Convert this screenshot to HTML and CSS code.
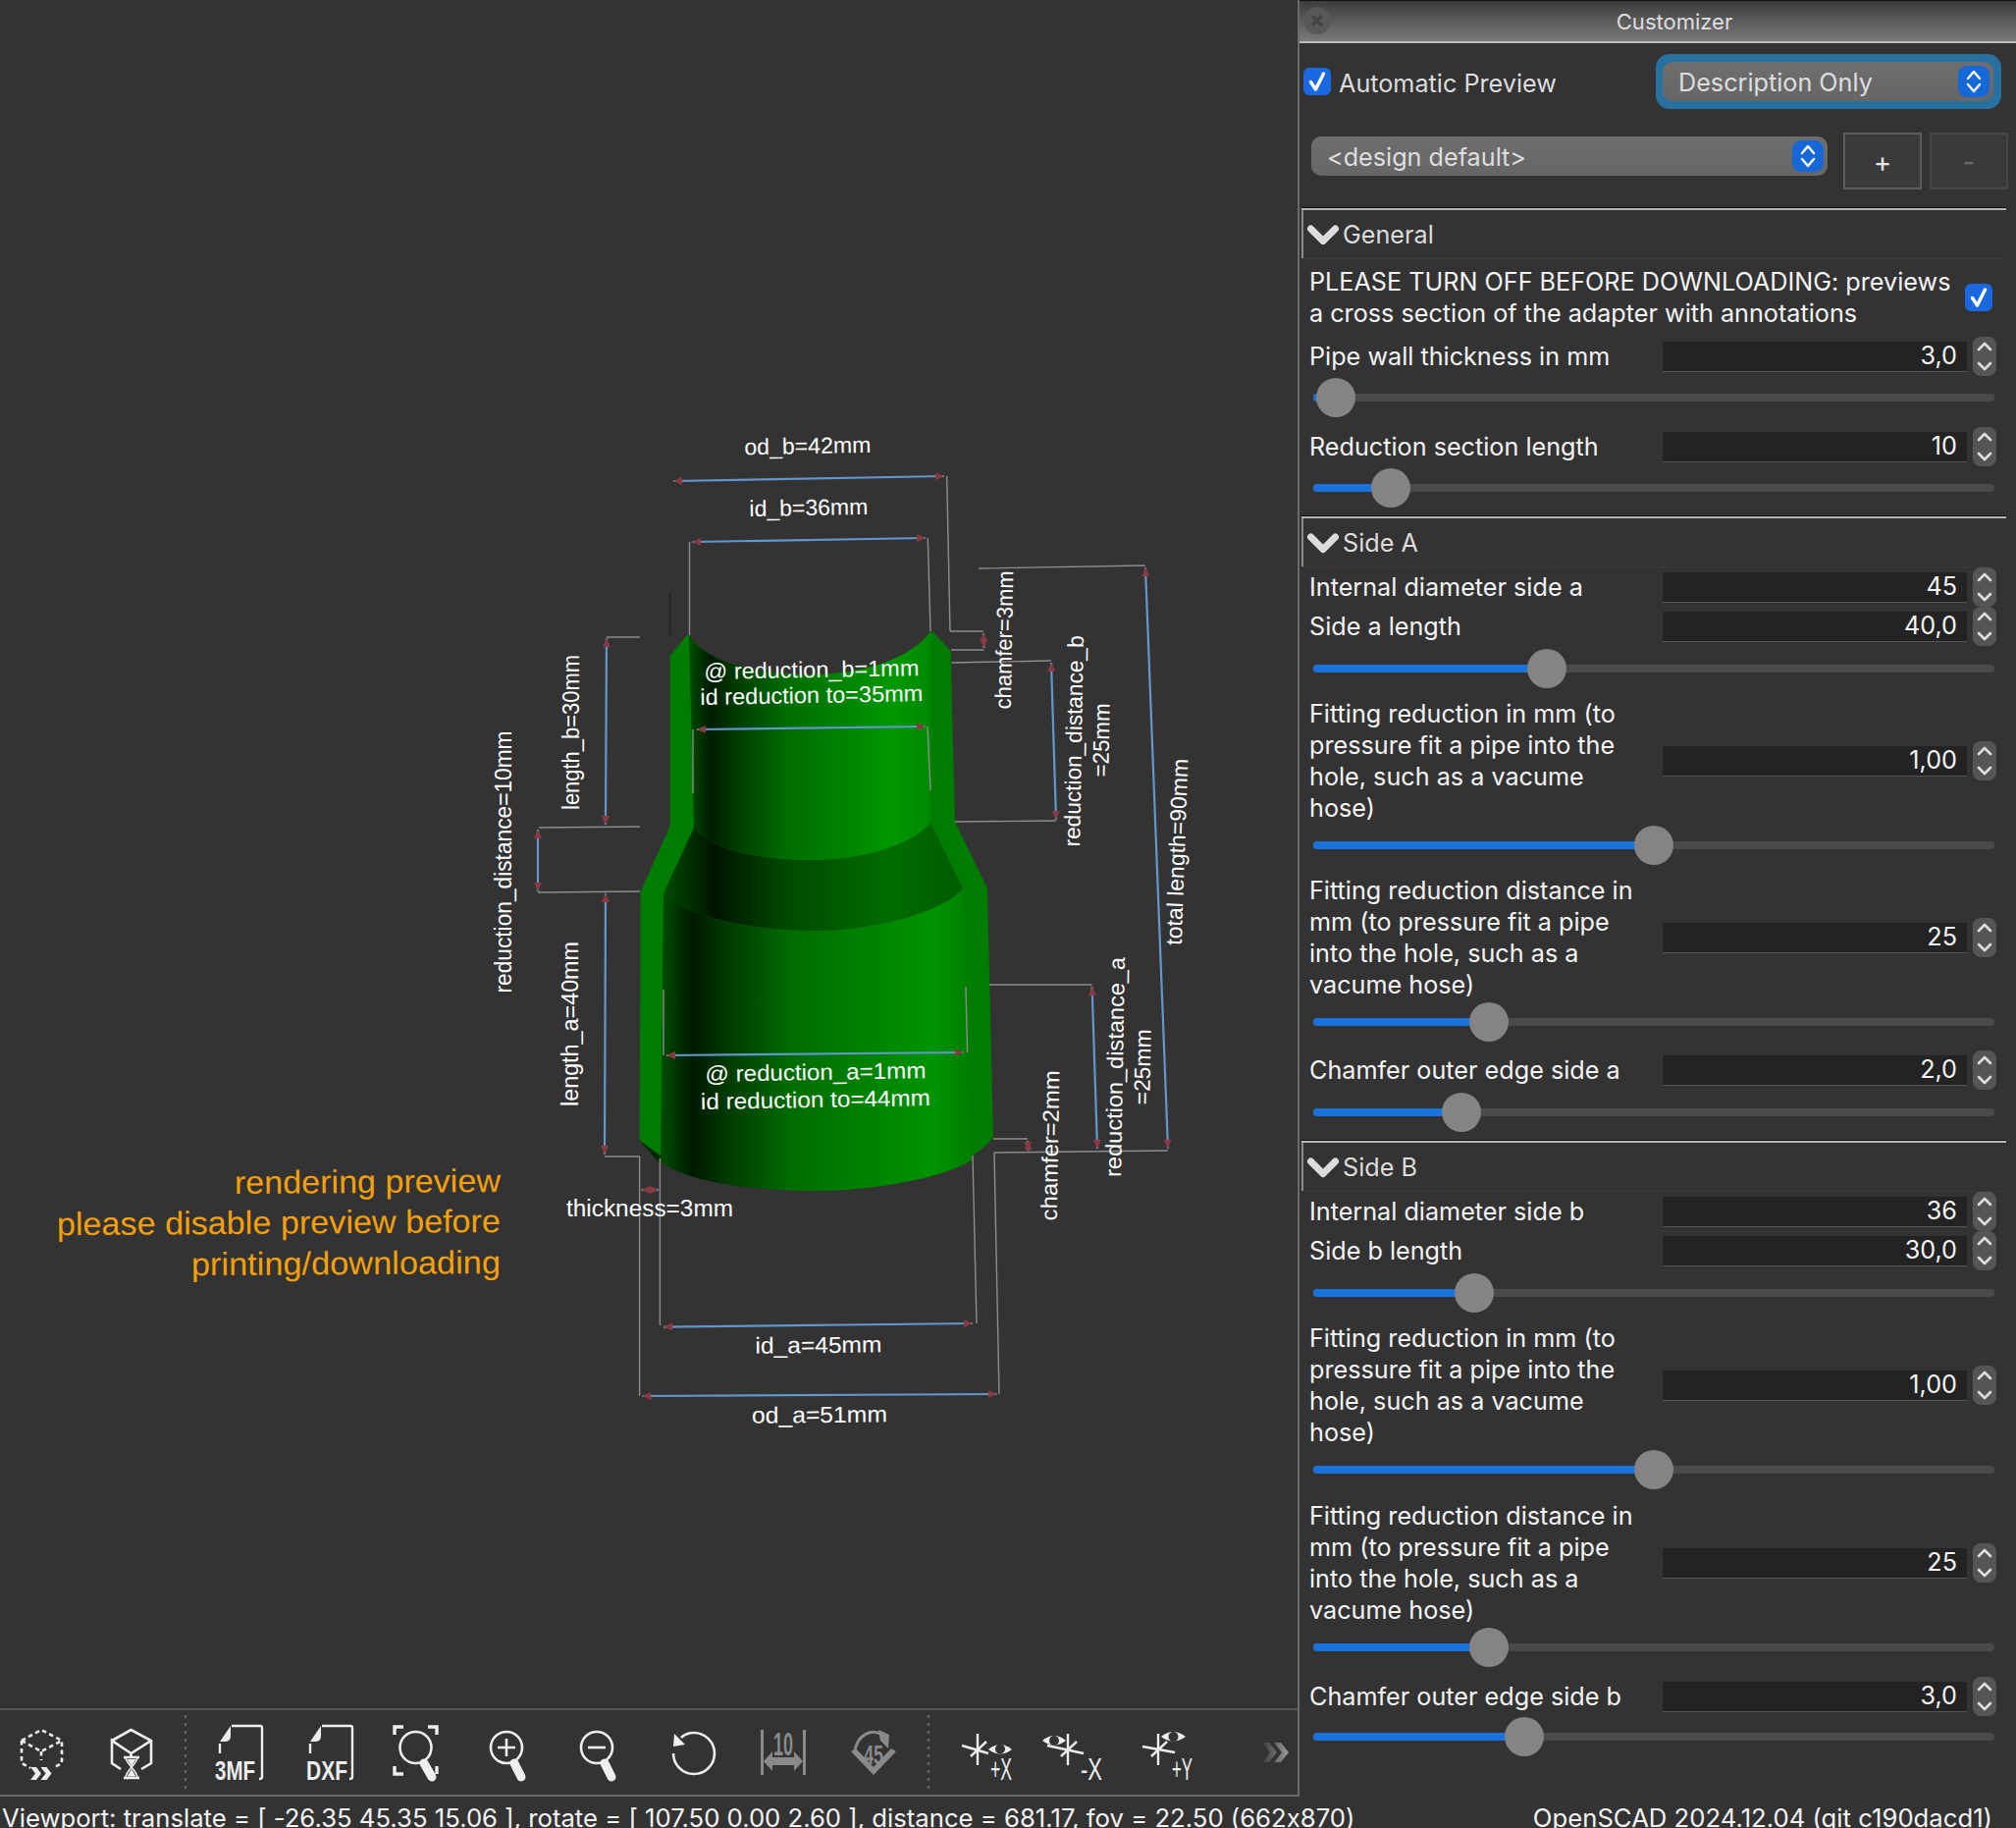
FILE: index.html
```html
<!DOCTYPE html>
<html lang="en">
<head>
<meta charset="utf-8">
<title>OpenSCAD Customizer</title>
<link rel="stylesheet" href="styles.css">
</head>
<body>
<svg class="defs" width="0" height="0" aria-hidden="true">
  <defs>
    <symbol id="tick" viewBox="0 0 28 28"><path d="M7.5 14.5 L12.5 22 L20.5 6" fill="none" stroke="#fff" stroke-width="3.4" stroke-linecap="round" stroke-linejoin="round"/></symbol>
    <symbol id="updown" viewBox="0 0 32 32"><path d="M10 13 L16 6 L22 13 M10 19 L16 26 L22 19" fill="none" stroke="#fff" stroke-width="2.4" stroke-linecap="round" stroke-linejoin="round"/></symbol>
    <symbol id="spin" viewBox="0 0 24 40"><path d="M6 13 L12 7 L18 13 M6 27 L12 33 L18 27" fill="none" stroke="#ddd" stroke-width="2.6" stroke-linecap="round" stroke-linejoin="round"/></symbol>
    <symbol id="chev" viewBox="0 0 34 22"><path d="M4.5 5 L17 17.5 L29.5 5" fill="none" stroke="#dcdcdc" stroke-width="7" stroke-linecap="round" stroke-linejoin="round"/></symbol>
    <symbol id="file" viewBox="0 0 68 60"><path d="M26 3 H55 Q57 3 57 5 V55 Q57 57 54 57 M14 21 V31" fill="none" stroke="#eee" stroke-width="2.4"/><path d="M14 19 L25 3 V13 Q25 19 19 19 Z" fill="#eee"/></symbol>
    <symbol id="star" viewBox="0 0 68 60"><path d="M23 11 V43 M16 34 L32 19" fill="none" stroke="#eee" stroke-width="2.4"/></symbol>
    <marker id="arrow" markerUnits="userSpaceOnUse" markerWidth="12" markerHeight="10" refX="9" refY="4" orient="auto-start-reverse"><path d="M0 0 L9 4 L0 8 Z" fill="#8b3a42"/></marker>
    <linearGradient id="gu" gradientUnits="userSpaceOnUse" x1="702" y1="0" x2="948" y2="0"><stop offset="0" stop-color="#004c00"/><stop offset=".09" stop-color="#001c00"/><stop offset=".2" stop-color="#003c00"/><stop offset=".4" stop-color="#006c00"/><stop offset=".85" stop-color="#009800"/><stop offset="1" stop-color="#008800"/></linearGradient>
    <linearGradient id="gc" gradientUnits="userSpaceOnUse" x1="676" y1="0" x2="981" y2="0"><stop offset="0" stop-color="#004c00"/><stop offset=".17" stop-color="#001400"/><stop offset=".4" stop-color="#004800"/><stop offset=".75" stop-color="#006c00"/><stop offset="1" stop-color="#005c00"/></linearGradient>
    <linearGradient id="gl" gradientUnits="userSpaceOnUse" x1="674" y1="0" x2="988" y2="0"><stop offset="0" stop-color="#004c00"/><stop offset=".1" stop-color="#001a00"/><stop offset=".22" stop-color="#003c00"/><stop offset=".42" stop-color="#006c00"/><stop offset=".88" stop-color="#009400"/><stop offset="1" stop-color="#007e00"/></linearGradient>
    <linearGradient id="gm" x1="0" y1="0" x2="1" y2="0"><stop offset="0" stop-color="#3c3c3c"/><stop offset="1" stop-color="#999"/></linearGradient>
  </defs>
</svg>
<div class="main">
  <div class="left">
    <svg class="scene" viewBox="0 0 1322 1740" width="1322" height="1740">
      <path class="hull" d="M700 647 L682.6 668 V841.7 L652.6 908 L651.6 1161 C690 1195 760 1213 829 1213 C900 1213 985 1195 1012 1158 L1006 905 L973 837 L968.6 663 L950 643 C930 670 880 687 826 687 C770 687 720 675 702 647 Z"/>
      <path d="M652 1162 L671 1184 L673 1178 Z" fill="#002a00"/>
      <path fill="url(#gl)" d="M676 910 C700 935 770 948 830 948 C890 948 960 930 981 905 L985 1072 L990 1182 C960 1200 890 1213 829 1213 C770 1213 700 1205 673 1183 Z"/>
      <path fill="url(#gc)" d="M707 843 C725 865 770 876 826 876 C880 876 930 860 948 838 L981 905 C960 930 890 948 830 948 C770 948 700 935 676 910 Z"/>
      <path fill="url(#gu)" d="M702 647 C720 675 770 687 826 687 C880 687 930 670 948 643 L948 838 C930 860 880 876 826 876 C770 876 725 865 707 843 Z"/>

      <g class="ext">
        <path d="M964.7 485 L968 643 M702.5 552 V647 M945.3 548 L948 643"/>
        <path class="faint" d="M682.6 603 V647"/>
        <path d="M968 643 H1002 M969 662 H1002.5 M969.6 675 L1071 673 M973 837 L1076 836 M997 579 L1167 576 M1013 1174 L1190 1172"/>
        <path d="M618 649 H652 M549 843 L652 842 M548 909 L652 908 M616 1178 H651.6"/>
        <path d="M706 743 V808 M945 740 L948 805 M676 1008 V1075 M984 1005 L985.6 1072"/>
        <path d="M1008 1003 H1112.6 M1012 1160 H1047"/>
        <path d="M651.6 1178 V1422 M672.4 1180 V1350 M991 1177 L995 1348 M1013 1174 L1018 1420"/>
      </g>
      <g class="dim">
        <line x1="686" y1="490" x2="962" y2="485"/>
        <line x1="705.4" y1="552" x2="943" y2="548"/>
        <line x1="710" y1="743" x2="943" y2="740"/>
        <line x1="679" y1="1075" x2="982" y2="1072"/>
        <line x1="676" y1="1351.6" x2="991" y2="1348"/>
        <line x1="654.5" y1="1422" x2="1015.6" y2="1420"/>
        <line x1="653.5" y1="1212" x2="671" y2="1212"/>
        <line x1="1002" y1="645" x2="1002.5" y2="660"/>
        <line x1="1071" y1="675" x2="1076" y2="835"/>
        <line x1="1167" y1="578" x2="1190" y2="1170"/>
        <line x1="618" y1="650" x2="617" y2="840"/>
        <line x1="548" y1="845" x2="548" y2="908"/>
        <line x1="617" y1="910" x2="616" y2="1176"/>
        <line x1="1112.6" y1="1005" x2="1118" y2="1170"/>
        <line x1="1047" y1="1162" x2="1047.6" y2="1172"/>
      </g>
      <g class="lbl">
        <text x="823" y="462" textLength="129" lengthAdjust="spacingAndGlyphs" transform="rotate(-1 823 462)">od_b=42mm</text>
        <text x="824" y="525" textLength="121" lengthAdjust="spacingAndGlyphs" transform="rotate(-1 824 525)">id_b=36mm</text>
        <text x="827" y="690" textLength="219" lengthAdjust="spacingAndGlyphs" transform="rotate(-1 827 690)">@ reduction_b=1mm</text>
        <text x="827" y="716" textLength="227" lengthAdjust="spacingAndGlyphs" transform="rotate(-1 827 716)">id reduction to=35mm</text>
        <text x="831" y="1100" textLength="225" lengthAdjust="spacingAndGlyphs" transform="rotate(-1 831 1100)">@ reduction_a=1mm</text>
        <text x="831" y="1128" textLength="234" lengthAdjust="spacingAndGlyphs" transform="rotate(-1 831 1128)">id reduction to=44mm</text>
        <text x="662" y="1239" textLength="170" lengthAdjust="spacingAndGlyphs">thickness=3mm</text>
        <text x="834" y="1378" textLength="129" lengthAdjust="spacingAndGlyphs" transform="rotate(-.5 834 1378)">id_a=45mm</text>
        <text x="835" y="1449" textLength="138" lengthAdjust="spacingAndGlyphs" transform="rotate(-.5 835 1449)">od_a=51mm</text>
        <text textLength="158" lengthAdjust="spacingAndGlyphs" transform="translate(590 746) rotate(-90)">length_b=30mm</text>
        <text textLength="267" lengthAdjust="spacingAndGlyphs" transform="translate(521 878) rotate(-90)">reduction_distance=10mm</text>
        <text textLength="168" lengthAdjust="spacingAndGlyphs" transform="translate(589 1043) rotate(-90)">length_a=40mm</text>
        <text textLength="141" lengthAdjust="spacingAndGlyphs" transform="translate(1031 652) rotate(-89)">chamfer=3mm</text>
        <text textLength="215" lengthAdjust="spacingAndGlyphs" transform="translate(1102 755) rotate(-89)">reduction_distance_b</text>
        <text textLength="75" lengthAdjust="spacingAndGlyphs" transform="translate(1130 754) rotate(-89)">=25mm</text>
        <text textLength="190" lengthAdjust="spacingAndGlyphs" transform="translate(1207 868) rotate(-88)">total length=90mm</text>
        <text textLength="224" lengthAdjust="spacingAndGlyphs" transform="translate(1144 1087) rotate(-89)">reduction_distance_a</text>
        <text textLength="77" lengthAdjust="spacingAndGlyphs" transform="translate(1172 1087) rotate(-89)">=25mm</text>
        <text textLength="153" lengthAdjust="spacingAndGlyphs" transform="translate(1078 1167) rotate(-89)">chamfer=2mm</text>
      </g>
      <g class="warn">
        <text x="510" y="1214" textLength="271" lengthAdjust="spacingAndGlyphs" transform="rotate(-.4 510 1214)">rendering preview</text>
        <text x="510" y="1255" textLength="452" lengthAdjust="spacingAndGlyphs" transform="rotate(-.4 510 1255)">please disable preview before</text>
        <text x="510" y="1297" textLength="315" lengthAdjust="spacingAndGlyphs" transform="rotate(-.4 510 1297)">printing/downloading</text>
      </g>
    </svg>

    <div class="toolbar">
      <button class="tool"><svg class="ico" viewBox="0 0 68 60">
        <path class="ln dash" d="M14 18 L34 7 L55 18 V41 L46 46"/>
        <path class="ln dash" d="M14 18 V41 L23 46"/>
        <path class="ln dash" d="M14 18 L34 29 L55 18"/>
        <path class="ln dash" d="M34 29 V38"/>
        <path d="M23 45 H29 L34 51.5 L29 58 H23 L28 51.5 Z M33.5 45 H39.5 L44.5 51.5 L39.5 58 H33.5 L38.5 51.5 Z" fill="#eee"/>
      </svg></button>
      <button class="tool"><svg class="ico" viewBox="0 0 68 60">
        <path class="ln" d="M14 18 L33.5 7 L54 18 V41 L44 47 M23 47 L14 41 V18 L33.5 31 L54 18 M33.5 31 V34"/>
        <path class="ln" d="M26 35 H42 M26 56 H42"/>
        <path class="ln thin" d="M28 35 C28 42 40 48 40 56 M40 35 C40 42 28 48 28 56"/>
        <path d="M29.5 37 H38.5 L34 44 Z M34 47 L38.5 54.5 H29.5 Z" fill="#eee"/>
      </svg></button>
      <span class="sep first"></span>
      <button class="tool"><svg class="ico" viewBox="0 0 68 60"><use href="#file"/><text class="ftxt" x="9" y="58" textLength="41" lengthAdjust="spacingAndGlyphs">3MF</text></svg></button>
      <button class="tool"><svg class="ico" viewBox="0 0 68 60"><use href="#file"/><text class="ftxt" x="10" y="58" textLength="42" lengthAdjust="spacingAndGlyphs">DXF</text></svg></button>
      <button class="tool"><svg class="ico" viewBox="0 0 68 60">
        <path class="ln wide" d="M8 12 V4 H17 M42 4 H51 V12 M8 44 V52 H17"/>
        <circle class="ln" cx="29.5" cy="25" r="16"/>
        <path class="hdl" d="M38 41 L46 55"/><path class="ln wide" d="M51 44 V52"/>
      </svg></button>
      <button class="tool"><svg class="ico" viewBox="0 0 68 60">
        <circle class="ln" cx="30" cy="25" r="16"/><path class="ln" d="M21 25 H39 M30 16 V34"/><path class="hdl" d="M38 41 L45 55"/>
      </svg></button>
      <button class="tool"><svg class="ico" viewBox="0 0 68 60">
        <circle class="ln" cx="30" cy="25" r="16"/><path class="ln" d="M21 25 H39"/><path class="hdl" d="M38 41 L45 55"/>
      </svg></button>
      <button class="tool"><svg class="ico" viewBox="0 0 68 60">
        <path class="ln" d="M24 15 C28 11 32 10 37 10 A21 21 0 1 1 16 31"/>
        <path d="M17 11 L28 22 L16 24 Z" fill="#eee"/>
      </svg></button>
      <button class="tool off"><svg class="ico" viewBox="0 0 68 60">
        <path d="M13 7 H16 V53 H13 Z M56 7 H59 V53 H56 Z" fill="#8a8a8a"/>
        <path d="M16 39 L25 29 V35 H47 V29 L56 39 L47 49 V43 H25 V49 Z" fill="#8a8a8a"/>
        <text class="otxt" x="36" y="33" text-anchor="middle" textLength="20" lengthAdjust="spacingAndGlyphs">10</text>
      </svg></button>
      <button class="tool off"><svg class="ico" viewBox="0 0 68 60">
        <path d="M13 29 L18 26 L36 45 L54 26 L59 29 L36 53 Z" fill="#8a8a8a"/>
        <path d="M17 28 C20 12 34 5 45 12" fill="none" stroke="#8a8a8a" stroke-width="3"/>
        <path d="M41 7 L52 12 L51 26 L43 18 Z" fill="#8a8a8a"/>
        <text class="otxt small" x="36" y="42" text-anchor="middle" textLength="20" lengthAdjust="spacingAndGlyphs">45</text>
      </svg></button>
      <span class="sep second"></span>
      <button class="tool"><svg class="ico" viewBox="0 0 68 60">
        <use href="#star"/><path class="ln" d="M7 23 L34 31"/>
        <path d="M34 27 Q46 17 58 27 Q46 36 34 27 Z" fill="#eee"/><circle cx="46" cy="26.5" r="5" fill="#333"/>
        <text class="atxt" x="36" y="58" textLength="22" lengthAdjust="spacingAndGlyphs">+X</text>
      </svg></button>
      <button class="tool"><svg class="ico" viewBox="0 0 68 60">
        <use href="#star"/><path class="ln" d="M2 23 L39 31"/>
        <path d="M-3 18 Q9 8 21 18 Q9 27 -3 18 Z" fill="#eee"/><circle cx="9" cy="18" r="5" fill="#333"/>
        <text class="atxt" x="36" y="58" textLength="22" lengthAdjust="spacingAndGlyphs">-X</text>
      </svg></button>
      <button class="tool"><svg class="ico" viewBox="0 0 68 60">
        <use href="#star"/><path class="ln" d="M7 24 L40 30"/>
        <path d="M26 14 Q38 4 51 14 Q38 23 26 14 Z" fill="#eee"/><circle cx="38.5" cy="14" r="5" fill="#333"/>
        <text class="atxt" x="37" y="58" textLength="21" lengthAdjust="spacingAndGlyphs">+Y</text>
      </svg></button>
      <button class="tool more"><svg class="more-ico" viewBox="0 0 28 20"><path d="M0 0 H7 L15 10 L7 20 H0 L8 10 Z M12 0 H19 L27 10 L19 20 H12 L20 10 Z" fill="url(#gm)"/></svg></button>
    </div>
  </div>

  <aside class="panel">
    <header class="title">
      <span class="close"><svg viewBox="0 0 28 28"><path d="M9 9 L19 19 M19 9 L9 19" stroke="#444" stroke-width="3.4"/></svg></span>
      Customizer
    </header>
    <div class="top-row">
      <span class="check"><svg><use href="#tick"/></svg></span>
      <span class="auto">Automatic Preview</span>
      <div class="combo-ring"><div class="combo wide">Description Only<span class="ind"><svg><use href="#updown"/></svg></span></div></div>
    </div>
    <div class="preset-row">
      <div class="combo preset">&lt;design default&gt;<span class="ind"><svg><use href="#updown"/></svg></span></div>
      <button class="pbtn">+</button>
      <button class="pbtn dis">-</button>
    </div>

    <section class="section">
      <div class="head"><svg class="chev"><use href="#chev"/></svg>General</div>
      <div class="row desc gap-8"><span class="label">PLEASE TURN OFF BEFORE DOWNLOADING: previews<br>a cross section of the adapter with annotations</span><span class="check"><svg><use href="#tick"/></svg></span></div>
      <div class="row gap-12"><span class="label">Pipe wall thickness in mm</span><span class="field">3,0</span><span class="spin"><svg><use href="#spin"/></svg></span></div>
      <div class="slider gap-6"><div class="fill" style="width:23px"></div><div class="thumb" style="left:3px"></div></div>
      <div class="row gap-14"><span class="label">Reduction section length</span><span class="field">10</span><span class="spin"><svg><use href="#spin"/></svg></span></div>
      <div class="slider gap-6"><div class="fill" style="width:79px"></div><div class="thumb" style="left:59px"></div></div>
    </section>

    <section class="section gap-8">
      <div class="head"><svg class="chev"><use href="#chev"/></svg>Side A</div>
      <div class="row gap-5"><span class="label">Internal diameter side a</span><span class="field">45</span><span class="spin"><svg><use href="#spin"/></svg></span></div>
      <div class="row gap-8"><span class="label">Side a length</span><span class="field">40,0</span><span class="spin"><svg><use href="#spin"/></svg></span></div>
      <div class="slider gap-7"><div class="fill" style="width:238px"></div><div class="thumb" style="left:218px"></div></div>
      <div class="row multi gap-10"><span class="label">Fitting reduction in mm (to pressure fit a pipe into the hole, such as a vacume hose)</span><span class="field">1,00</span><span class="spin"><svg><use href="#spin"/></svg></span></div>
      <div class="slider gap-2"><div class="fill" style="width:347px"></div><div class="thumb" style="left:327px"></div></div>
      <div class="row multi gap-10"><span class="label">Fitting reduction distance in mm (to pressure fit a pipe into the hole, such as a vacume hose)</span><span class="field">25</span><span class="spin"><svg><use href="#spin"/></svg></span></div>
      <div class="slider gap-2"><div class="fill" style="width:179px"></div><div class="thumb" style="left:159px"></div></div>
      <div class="row gap-13"><span class="label">Chamfer outer edge side a</span><span class="field">2,0</span><span class="spin"><svg><use href="#spin"/></svg></span></div>
      <div class="slider gap-7"><div class="fill" style="width:151px"></div><div class="thumb" style="left:131px"></div></div>
    </section>

    <section class="section gap-8">
      <div class="head"><svg class="chev"><use href="#chev"/></svg>Side B</div>
      <div class="row gap-5"><span class="label">Internal diameter side b</span><span class="field">36</span><span class="spin"><svg><use href="#spin"/></svg></span></div>
      <div class="row gap-8"><span class="label">Side b length</span><span class="field">30,0</span><span class="spin"><svg><use href="#spin"/></svg></span></div>
      <div class="slider gap-7"><div class="fill" style="width:164px"></div><div class="thumb" style="left:144px"></div></div>
      <div class="row multi gap-10"><span class="label">Fitting reduction in mm (to pressure fit a pipe into the hole, such as a vacume hose)</span><span class="field">1,00</span><span class="spin"><svg><use href="#spin"/></svg></span></div>
      <div class="slider gap-2"><div class="fill" style="width:347px"></div><div class="thumb" style="left:327px"></div></div>
      <div class="row multi gap-11"><span class="label">Fitting reduction distance in mm (to pressure fit a pipe into the hole, such as a vacume hose)</span><span class="field">25</span><span class="spin"><svg><use href="#spin"/></svg></span></div>
      <div class="slider gap-2"><div class="fill" style="width:179px"></div><div class="thumb" style="left:159px"></div></div>
      <div class="row gap-14"><span class="label">Chamfer outer edge side b</span><span class="field">3,0</span><span class="spin"><svg><use href="#spin"/></svg></span></div>
      <div class="slider gap-5"><div class="fill" style="width:215px"></div><div class="thumb" style="left:195px"></div></div>
    </section>
  </aside>
</div>
<footer class="status">
  <span>Viewport: translate = [ -26.35 45.35 15.06 ], rotate = [ 107.50 0.00 2.60 ], distance = 681.17, fov = 22.50 (662x870)</span>
  <span>OpenSCAD 2024.12.04 (git c190dacd1)</span>
</footer>
</body>
</html>
```
FILE: styles.css
```css
* { box-sizing: border-box; }
html, body { margin: 0; padding: 0; height: 100%; overflow: hidden; }
body {
  background: #333;
  color: #f4f4f4;
  font-family: Inter, "Liberation Sans", sans-serif;
  font-size: 25.2px;
  font-variant-ligatures: no-contextual;
  font-feature-settings: "calt" 0;
  width: 2054px;
  height: 1862px;
}
.defs { position: absolute; }
.main { display: flex; height: 1830px; }
.left { width: 1322px; display: flex; flex-direction: column; }

/* 3D scene */
.scene { display: block; flex: none; }
.hull { fill: #007c00; }
.ext { fill: none; stroke: #8d8d8d; stroke-width: 1.4; }
.ext .faint { stroke: #222; }
.dim line { stroke: #6396cc; stroke-width: 2.2; marker-start: url(#arrow); marker-end: url(#arrow); }
.lbl text { font-family: "Liberation Sans", sans-serif; font-size: 23px; fill: #fff; text-anchor: middle; }
.warn text { font-family: "Liberation Sans", sans-serif; font-size: 33px; fill: #f5a00a; text-anchor: end; }

/* toolbar */
.toolbar {
  flex: none;
  height: 90px;
  border-top: 2px solid #555;
  border-bottom: 2px solid #6a6a6a;
  display: flex;
  align-items: center;
  gap: 24px;
  padding-left: 8px;
}
.tool { width: 68px; height: 60px; padding: 0; border: 0; background: none; flex: none; }
.ico { width: 68px; height: 60px; display: block; overflow: visible; }
.ln { fill: none; stroke: #eee; stroke-width: 2.6; }
.ln.dash { stroke-dasharray: 4.5 3.5; }
.ln.thin { stroke-width: 1.6; }
.ln.wide { stroke-width: 3.4; }
.hdl { fill: none; stroke: #eee; stroke-width: 9; stroke-linecap: round; }
.ftxt { font-family: "Liberation Sans", sans-serif; font-weight: 700; font-size: 28px; fill: #eee; }
.otxt { font-family: "Liberation Sans", sans-serif; font-weight: 700; font-size: 33px; fill: #8a8a8a; }
.otxt.small { font-size: 27px; }
.atxt { font-family: "Liberation Sans", sans-serif; font-size: 31px; fill: #eee; }
.sep { width: 2px; height: 76px; flex: none; background: repeating-linear-gradient(#666 0 3px, transparent 3px 8px); }
.sep.first { margin: 0 -4px; }
.sep.second { margin: 0 2px 0 -1px; }
.tool.more { margin-left: auto; margin-right: 8px; width: 28px; }
.more-ico { width: 28px; height: 20px; display: block; }

/* customizer */
.panel { width: 732px; border-left: 2px solid #6a6a6a; flex: none; display: flex; flex-direction: column; }
.title {
  position: relative;
  height: 44px;
  padding: 5px 0 0 34px;
  text-align: center;
  font-size: 22px;
  line-height: 32px;
  color: #dedede;
  border-top: 1px solid #111;
  border-bottom: 2px solid #bcbcbc;
  background: linear-gradient(#3c3c3c, #7a7a7a);
}
.close { position: absolute; left: 4px; top: 6px; width: 28px; height: 28px; border-radius: 50%; background: #585858; }
.close svg { display: block; width: 28px; height: 28px; }
.top-row { display: flex; align-items: center; height: 56px; margin-top: 11px; padding-left: 4px; }
.check { width: 28px; height: 28px; flex: none; border-radius: 6px; background: #1b69e0; display: block; }
.check svg { width: 28px; height: 28px; display: block; }
.auto { margin-left: 8px; padding-top: 3px; color: #dcdcdc; }
.combo-ring { margin-left: auto; margin-right: 15px; width: 352px; height: 56px; padding: 8px; border-radius: 14px; background: #27709f; }
.combo {
  position: relative;
  display: flex;
  align-items: center;
  height: 40px;
  padding: 2px 0 0 16px;
  border-radius: 10px;
  background: linear-gradient(#6e6e6e, #666);
  color: #dedede;
}
.combo.wide { width: 337px; margin-left: -1px; }
.ind { position: absolute; right: 4px; top: 4px; width: 32px; height: 32px; border-radius: 9px; background: #1668d8; }
.ind svg { display: block; width: 32px; height: 32px; }
.preset-row { display: flex; align-items: flex-start; margin-top: 24px; padding-left: 12px; }
.combo.preset { width: 526px; margin-top: 4px; }
.pbtn {
  width: 80px;
  height: 58px;
  margin-left: 16px;
  background: #3a3a3a;
  border: 2px solid #5c5c5c;
  color: #e6e6e6;
  font: 28px Inter, "Liberation Sans", sans-serif;
  padding: 2px 0 0;
}
.pbtn.dis { margin-left: 8px; color: #6a6a6a; border-color: #474747; }

.section { flex: none; }
.preset-row + .section { margin-top: 18px; }
.head {
  display: flex;
  align-items: center;
  height: 52px;
  margin-left: 2px;
  margin-right: 10px;
  padding: 3px 0 0 5px;
  border-top: 1px solid #111;
  box-shadow: inset 0 2px 0 #b5b5b5, inset 2px 0 0 #8a8a8a, 0 1px 0 #3a3a3a;
  color: #dcdcdc;
}
.chev { width: 34px; height: 22px; margin-right: 3px; flex: none; }
.row { display: flex; align-items: center; height: 32px; padding-left: 10px; line-height: 32px; }
.row.desc { height: 64px; }
.row.multi { height: 128px; }
.label { white-space: nowrap; }
.row.desc .check { margin-left: auto; margin-right: 24px; }
.row.multi .label { white-space: normal; width: 340px; }
.field {
  margin-left: auto;
  width: 310px;
  height: 31px;
  padding-right: 10px;
  text-align: right;
  line-height: 28px;
  background: #232323;
  border-bottom: 1px solid #555;
  flex: none;
}
.spin { width: 24px; height: 40px; margin: 0 20px 0 6px; border-radius: 8px; background: #555; flex: none; }
.spin svg { display: block; width: 24px; height: 40px; }
.slider { position: relative; height: 40px; width: 694px; margin-left: 14px; }
.slider::before { content: ""; position: absolute; left: 0; right: 0; top: 16px; height: 8px; border-radius: 4px; background: #4a4a4a; }
.fill { position: absolute; left: 0; top: 16px; height: 8px; border-radius: 4px; background: #1a73dc; }
.thumb { position: absolute; top: 0; width: 40px; height: 40px; border-radius: 50%; background: #848484; }

.gap-2 { margin-top: 2px; }
.gap-5 { margin-top: 5px; }
.gap-6 { margin-top: 6px; }
.gap-7 { margin-top: 7px; }
.gap-8 { margin-top: 8px; }
.gap-10 { margin-top: 10px; }
.gap-11 { margin-top: 11px; }
.gap-12 { margin-top: 12px; }
.gap-13 { margin-top: 13px; }
.gap-14 { margin-top: 14px; }

.status {
  height: 32px;
  display: flex;
  justify-content: space-between;
  padding: 6px 24px 0 2px;
  font-size: 25.7px;
  line-height: 32px;
  white-space: nowrap;
}
```
